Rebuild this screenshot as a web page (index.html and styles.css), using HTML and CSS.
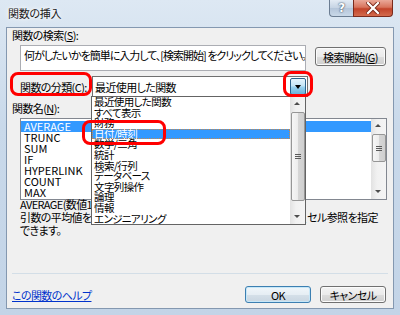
FILE: index.html
```html
<!DOCTYPE html>
<html lang="ja">
<head>
    <meta charset="UTF-8">
    <title>関数の挿入</title>
    <link rel="stylesheet" href="styles.css">
</head>
<body>
    <div class="window">
        <div class="titlebar">
            <span class="title">関数の挿入</span>
            <div class="caption-buttons">
                <span class="cap-btn help">?</span>
                <span class="cap-btn close">
                    <svg width="14" height="12" viewBox="0 0 14 12">
                        <path d="M2 1 L12 11 M12 1 L2 11" stroke="#7a2a1c" stroke-width="4" stroke-linecap="square"/>
                        <path d="M2 1 L12 11 M12 1 L2 11" stroke="#fff" stroke-width="2.2" stroke-linecap="square"/>
                    </svg>
                </span>
            </div>
        </div>

        <div class="client">
            <div class="label">関数の検索(<u>S</u>):</div>
            <div class="search-row">
                <div class="search-box">何がしたいかを簡単に入力して、[検索開始] をクリックしてください。</div>
                <button class="btn search-btn">検索開始(<u>G</u>)</button>
            </div>

            <div class="category-row">
                <span class="label category-label">関数の分類(<u>C</u>):</span>
                <div class="combo">
                    <span class="combo-text">最近使用した関数</span>
                    <span class="drop-btn"></span>
                </div>
            </div>

            <div class="label name-label">関数名(<u>N</u>):</div>
            <div class="listbox">
                <ul class="items">
                    <li class="selected">AVERAGE</li>
                    <li>TRUNC</li>
                    <li>SUM</li>
                    <li>IF</li>
                    <li>HYPERLINK</li>
                    <li>COUNT</li>
                    <li>MAX</li>
                </ul>
                <div class="scrollbar">
                    <span class="arrow up"></span>
                    <span class="thumb small"><span class="grip"></span></span>
                    <span class="track-fill"></span>
                    <span class="arrow down"></span>
                </div>
            </div>

            <div class="description">
                <div>AVERAGE(数値1,数値2,...)</div>
                <div>引数の平均値を返します。引数には、数値、数値を含む名前、配列、セル参照を指定</div>
                <div>できます。</div>
            </div>

            <div class="separator"></div>

            <div class="footer">
                <a class="help-link" href="#">この関数のヘルプ</a>
                <button class="btn default">OK</button>
                <button class="btn">キャンセル</button>
            </div>

            <!-- open dropdown of the category combo -->
            <div class="dropdown">
                <ul class="items">
                    <li>最近使用した関数</li>
                    <li>すべて表示</li>
                    <li>財務</li>
                    <li class="selected focus">日付/時刻</li>
                    <li>数学/三角</li>
                    <li>統計</li>
                    <li>検索/行列</li>
                    <li>データベース</li>
                    <li>文字列操作</li>
                    <li>論理</li>
                    <li>情報</li>
                    <li>エンジニアリング</li>
                </ul>
                <div class="scrollbar">
                    <span class="arrow up"></span>
                    <span class="thumb large"><span class="grip"></span></span>
                    <span class="track-fill"></span>
                    <span class="arrow down"></span>
                </div>
            </div>

            <!-- red markers -->
            <span class="mark mark-label"></span>
            <span class="mark mark-drop"></span>
            <span class="mark mark-item"></span>
        </div>
    </div>
</body>
</html>
```

FILE: styles.css
```css
body {
    margin: 0;
    width: 400px;
    height: 315px;
    overflow: hidden;
    font-family: "Noto Sans CJK JP", "Noto Sans", sans-serif;
    font-size: 11px;
    font-feature-settings: "palt";
    letter-spacing: -0.6px;
    color: #000;
    background: #fff;
}
ul {
    list-style: none;
    margin: 0;
    padding: 0;
}
.window {
    width: 400px;
    height: 315px;
    background: linear-gradient(#dde8f3, #c9d9ea 40%, #c3d4e7);
}
.titlebar {
    height: 28px;
    display: flex;
    align-items: flex-start;
}
.title {
    padding-left: 8px;
    line-height: 26px;
    color: #1a1a1a;
    letter-spacing: -0.3px;
    text-shadow: 0 0 6px #fff, 0 0 3px #fff;
}
.caption-buttons {
    margin-left: auto;
    margin-right: 7px;
    display: flex;
}
.cap-btn {
    height: 17px;
    display: flex;
    align-items: center;
    justify-content: center;
    border: 1px solid #6b7d92;
    border-top: none;
    box-sizing: border-box;
}
.help {
    width: 24px;
    border-radius: 0 0 0 4px;
    border-right: none;
    background: linear-gradient(#e3ebf4, #c5d3e3 50%, #b4c5d9 51%, #c9d8e8);
    color: #fff;
    font-family: "DejaVu Sans", sans-serif;
    font-weight: bold;
    font-size: 12px;
    text-shadow: 0 0 2px #3d4d63, 0 0 1px #3d4d63;
}
.close {
    width: 40px;
    border-radius: 0 0 4px 0;
    border-color: #7a2a1c;
    background: linear-gradient(#eaa899, #d8745d 45%, #c2432a 55%, #d36b4d);
}
.client {
    position: relative;
    margin: 0 7px;
    height: 280px;
    box-sizing: border-box;
    padding: 1px 5px 0;
    background: #f0f0f0;
    box-shadow: 0 0 0 1px #8498b0;
}
.label {
    line-height: 12px;
    white-space: nowrap;
}
.search-row {
    display: flex;
    margin-top: 4px;
}
.search-box {
    margin-left: 8px;
    width: 286px;
    height: 26px;
    box-sizing: border-box;
    padding: 3px 3px;
    line-height: 13px;
    letter-spacing: -1px;
    white-space: nowrap;
    overflow: hidden;
    background: #fff;
    border: 1px solid #abadb3;
}
.btn {
    font: inherit;
    font-feature-settings: "palt";
    letter-spacing: -0.6px;
    color: #000;
    padding: 0;
    height: 17px;
    width: 66px;
    line-height: 14px;
    border: 1px solid #707070;
    border-radius: 3px;
    background: linear-gradient(#f3f3f3, #ebebeb 50%, #dddddd 51%, #cfcfcf);
    box-shadow: inset 0 0 0 1px #fbfbfb;
}
.search-btn {
    margin: 2px 0 0 9px;
    width: 71px;
    height: 19px;
}
.category-row {
    display: flex;
    align-items: center;
    margin-top: 5px;
    height: 21px;
}
.category-label {
    margin-left: 8px;
    width: 72px;
}
.combo {
    width: 216px;
    height: 21px;
    box-sizing: border-box;
    display: flex;
    align-items: center;
    background: #fff;
    border: 1px solid #707070;
}
.combo-text {
    padding-left: 2px;
    flex: 1;
}
.drop-btn {
    position: relative;
    width: 16px;
    height: 17px;
    margin-right: 1px;
    box-sizing: border-box;
    border: 1px solid #2c628b;
    border-radius: 2px;
    background: linear-gradient(#e5f4fc, #c4e5f6 45%, #98d1ef 55%, #68b3db);
}
.drop-btn::after {
    content: "";
    position: absolute;
    left: 4px;
    top: 6px;
    border-left: 3px solid transparent;
    border-right: 3px solid transparent;
    border-top: 4px solid #000;
}
.name-label {
    margin-top: 5px;
}
.listbox {
    display: flex;
    margin: 4px 0 0 8px;
    width: 367px;
    height: 82px;
    box-sizing: border-box;
    background: #fff;
    border: 1px solid #828790;
}
.items {
    flex: 1;
}
.listbox .items {
    padding-top: 2px;
    letter-spacing: 0;
}
.items li {
    line-height: 11px;
    height: 11px;
    padding-left: 3px;
    white-space: nowrap;
}
.items li.selected {
    background: #3399ff;
    color: #fff;
}
.items li.focus {
    outline: 1px dotted #c8884a;
    outline-offset: -1px;
}
.scrollbar {
    width: 15px;
    display: flex;
    flex-direction: column;
    align-items: center;
    background: linear-gradient(to right, #e2e2e2, #f1f1f1 40%, #f4f4f4);
}
.arrow {
    height: 15px;
    width: 15px;
    position: relative;
}
.arrow::before {
    content: "";
    position: absolute;
    left: 4px;
    border-left: 3px solid transparent;
    border-right: 3px solid transparent;
}
.arrow.up::before {
    top: 5px;
    border-bottom: 3px solid #4d4d4d;
}
.arrow.down::before {
    top: 6px;
    border-top: 3px solid #4d4d4d;
}
.thumb {
    width: 14px;
    box-sizing: border-box;
    display: flex;
    align-items: center;
    justify-content: center;
    border: 1px solid #969696;
    border-radius: 2px;
    background: linear-gradient(to right, #f6f6f6, #ececec 50%, #d6d6d6 51%, #cfcfcf);
}
.thumb.small {
    height: 28px;
}
.thumb.large {
    height: 89px;
}
.track-fill {
    flex: 1;
}
.grip {
    width: 6px;
    height: 5px;
    background: repeating-linear-gradient(#5a5a5a 0 1px, transparent 1px 2px);
}
.description {
    margin: -2px 0 0 8px;
    line-height: 13px;
    white-space: nowrap;
}
.separator {
    margin-top: 36px;
    height: 1px;
    background: #d3dee7;
}
.footer {
    display: flex;
    align-items: center;
    margin-top: 12px;
    padding-right: 2px;
}
.help-link {
    color: #0033cc;
    text-decoration: underline;
    margin-right: auto;
}
.footer .btn + .btn {
    margin-left: 9px;
}
.btn.default {
    border-color: #3c7fb1;
    box-shadow: inset 0 0 0 1px #c6e7f8;
    background: linear-gradient(#f0f6fa, #e6eef4 50%, #d5e0e9 51%, #c9d6e1);
}
.dropdown {
    position: absolute;
    left: 84px;
    top: 68px;
    width: 215px;
    display: flex;
    box-sizing: border-box;
    background: #fff;
    border: 1px solid #646464;
    z-index: 2;
}
.dropdown .items li {
    height: 10.6px;
    line-height: 10.6px;
    font-size: 10.5px;
    padding-left: 2px;
}
.mark {
    position: absolute;
    border: 3px solid #ff0000;
    border-radius: 8px;
    box-sizing: border-box;
    z-index: 3;
}
.mark-label {
    left: 3px;
    top: 44px;
    width: 82px;
    height: 24px;
}
.mark-drop {
    left: 276px;
    top: 43px;
    width: 30px;
    height: 26px;
}
.mark-item {
    left: 75px;
    top: 92px;
    width: 84px;
    height: 25px;
}
```
